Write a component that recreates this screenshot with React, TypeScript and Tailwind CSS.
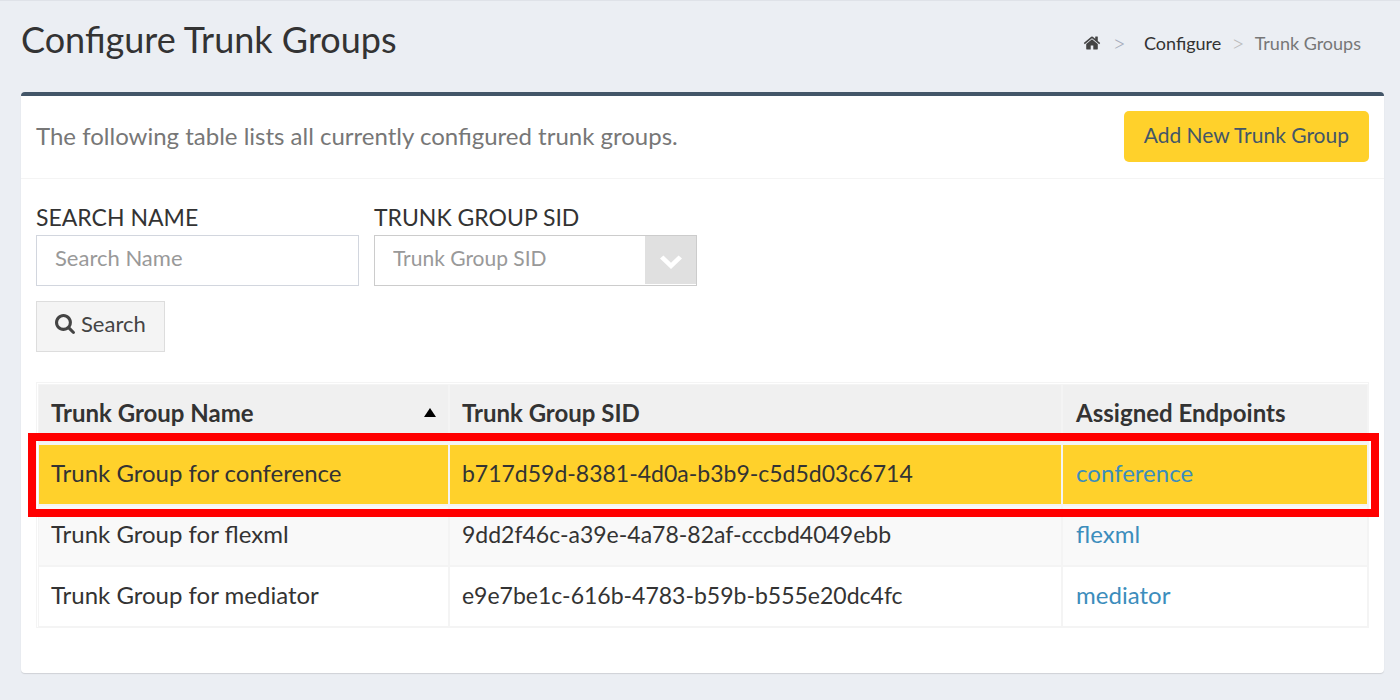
import { useState } from "react";
import clsx from "clsx";

type TrunkGroup = {
  name: string;
  sid: string;
  endpoint: string;
};

const trunkGroups: TrunkGroup[] = [
  {
    name: "Trunk Group for conference",
    sid: "b717d59d-8381-4d0a-b3b9-c5d5d03c6714",
    endpoint: "conference",
  },
  {
    name: "Trunk Group for flexml",
    sid: "9dd2f46c-a39e-4a78-82af-cccbd4049ebb",
    endpoint: "flexml",
  },
  {
    name: "Trunk Group for mediator",
    sid: "e9e7be1c-616b-4783-b59b-b555e20dc4fc",
    endpoint: "mediator",
  },
];

const HomeIcon = () => (
  <svg viewBox="0 0 1792 1792" className="size-[18px]" fill="currentColor" aria-hidden="true">
    <path d="M1472 992v480q0 26-19 45t-45 19h-384v-384h-256v384h-384q-26 0-45-19t-19-45v-480q0-1 .5-3t.5-3l575-474 575 474q1 2 1 6zm223-69l-62 74q-8 9-21 11h-3q-13 0-21-7l-692-577-692 577q-12 8-24 7-13-2-21-11l-62-74q-8-10-7-23.5t11-21.5l719-599q32-26 76-26t76 26l244 204v-195q0-14 9-23t23-9h192q14 0 23 9t9 23v408l219 182q10 8 11 21.5t-7 23.5z" />
  </svg>
);

const SearchIcon = () => (
  <svg viewBox="64 128 1664 1664" className="size-5" fill="currentColor" aria-hidden="true">
    <path d="M1216 832q0-185-131.5-316.5t-316.5-131.5-316.5 131.5-131.5 316.5 131.5 316.5 316.5 131.5 316.5-131.5 131.5-316.5zm512 832q0 52-38 90t-90 38q-54 0-90-38l-343-342q-179 124-399 124-143 0-273.5-55.5t-225-150-150-225-55.5-273.5 55.5-273.5 150-225 225-150 273.5-55.5 273.5 55.5 225 150 150 225 55.5 273.5q0 220-124 399l343 343q37 37 37 90z" />
  </svg>
);

const ChevronIcon = () => (
  <svg viewBox="0 0 22 14" className="h-3.5 w-[22px]" fill="currentColor" aria-hidden="true">
    <path d="M3.4 0.4 11 7.8 18.6 0.4 22 3.6 11 14 0 3.6Z" />
  </svg>
);

const App = () => {
  const [name, setName] = useState("");
  const [sid, setSid] = useState("");

  return (
    <main className="min-h-screen border-t border-[#dfe2e8] bg-[#ebeef3] pr-4 pb-[27px] pl-[21px] font-['Lato',sans-serif] text-[24px] leading-8 text-[#333]">
      <header className="flex h-[91px] items-start justify-between pr-[23px]">
        <h1 className="pt-[17px] text-[36px] leading-[42px]">Configure Trunk Groups</h1>
        <nav aria-label="Breadcrumb" className="pt-[30px] text-[18px] leading-6">
          <ol className="flex items-center">
            <li>
              <a href="#home" aria-label="Home" className="block text-[#444]">
                <HomeIcon />
              </a>
            </li>
            <li aria-hidden="true" className="pr-[18px] pl-3 text-[23px] font-light text-[#a5abba]">&gt;</li>
            <li>
              <a href="#configure">Configure</a>
            </li>
            <li aria-hidden="true" className="px-2.5 text-[23px] font-light text-[#bbb]">&gt;</li>
            <li className="text-[#777]">Trunk Groups</li>
          </ol>
        </nav>
      </header>

      <section className="rounded-[4px] border-t-4 border-[#435668] bg-white shadow-[0_1px_1px_rgba(0,0,0,0.12)]">
        <div className="flex items-center justify-between border-b border-[#f4f4f4] p-[15px] pb-4">
          <p className="pb-0.5 text-[#777]">The following table lists all currently configured trunk groups.</p>
          <button
            type="button"
            className="h-[51px] rounded-[5px] bg-[#ffd12b] px-5 pb-1 text-[21px] text-[#435668]"
          >
            Add New Trunk Group
          </button>
        </div>

        <div className="px-[15px] pt-[22px] pb-[45px]">
          <form onSubmit={(e) => e.preventDefault()}>
            <div className="-mr-1 grid grid-cols-4 gap-[15px]">
              <div>
                <label htmlFor="search-name" className="block pb-0.5 text-[23px]">SEARCH NAME</label>
                <input
                  id="search-name"
                  type="text"
                  placeholder="Search Name"
                  value={name}
                  onChange={(e) => setName(e.target.value)}
                  className="block h-[51px] w-full border border-[#d2d6de] px-[18px] pb-1.5 text-[22px] placeholder:text-[#999]"
                />
              </div>
              <div>
                <label htmlFor="trunk-group-sid" className="block pb-0.5 text-[23px]">TRUNK GROUP SID</label>
                <div className="relative border border-[#ccc]">
                  <select
                    id="trunk-group-sid"
                    value={sid}
                    onChange={(e) => setSid(e.target.value)}
                    className="block h-[49px] w-full appearance-none pr-14 pb-1.5 pl-[18px] text-[21px] text-[#999]"
                  >
                    <option value="">Trunk Group SID</option>
                    {trunkGroups.map((group) => (
                      <option key={group.sid} value={group.sid}>{group.sid}</option>
                    ))}
                  </select>
                  <span className="pointer-events-none absolute top-0 right-0 bottom-px grid w-[51px] place-items-center bg-[#e0e0e0] pt-1 text-white">
                    <ChevronIcon />
                  </span>
                </div>
              </div>
            </div>
            <button
              type="submit"
              className="mt-[15px] flex h-[51px] items-center gap-1.5 border border-[#ddd] bg-[#f4f4f4] px-[18px] pb-1.5 text-[22px] text-[#444]"
            >
              <SearchIcon />
              Search
            </button>
          </form>

          <table className="mt-[30px] w-full table-fixed border-separate border-spacing-0 border border-[#f4f4f4] pt-px pl-px text-left">
            <colgroup>
              <col className="w-[30.9%]" />
              <col className="w-[46.1%]" />
              <col className="w-[23%]" />
            </colgroup>
            <thead>
              <tr className="h-[60px] bg-[#f0f0f0]">
                <th aria-sort="ascending" className="border border-b-2 border-[#f4f4f4] px-3 pb-0.5">
                  <span className="flex items-center justify-between">
                    Trunk Group Name
                    <svg viewBox="0 0 12 9" className="h-[9px] w-3" aria-hidden="true">
                      <path d="M6 0 12 9H0Z" />
                    </svg>
                  </span>
                </th>
                <th className="border border-b-2 border-[#f4f4f4] px-3 pb-0.5">Trunk Group SID</th>
                <th className="border border-b-2 border-[#f4f4f4] px-[13px] pb-0.5">Assigned Endpoints</th>
              </tr>
            </thead>
            <tbody>
              {trunkGroups.map((group, index) => (
                <tr
                  key={group.sid}
                  className={clsx("relative h-[61px]", index === 0 && "bg-[#ffd12b]", index === 1 && "bg-[#f9f9f9]")}
                >
                  <td className="border border-[#f4f4f4] px-3 pb-1">{group.name}</td>
                  <td className="border border-[#f4f4f4] px-3 pb-1 text-[23px]">{group.sid}</td>
                  <td className="border border-[#f4f4f4] px-[13px] pb-1">
                    <a href={`#${group.endpoint}`} className="text-[#3c8dbc]">{group.endpoint}</a>
                    {index === 0 && (
                      <span className="pointer-events-none absolute -top-[11px] -right-[11px] -bottom-3 -left-2.5 z-10 border-8 border-[#ff0000]" />
                    )}
                  </td>
                </tr>
              ))}
            </tbody>
          </table>
        </div>
      </section>
    </main>
  );
};

export default App;
